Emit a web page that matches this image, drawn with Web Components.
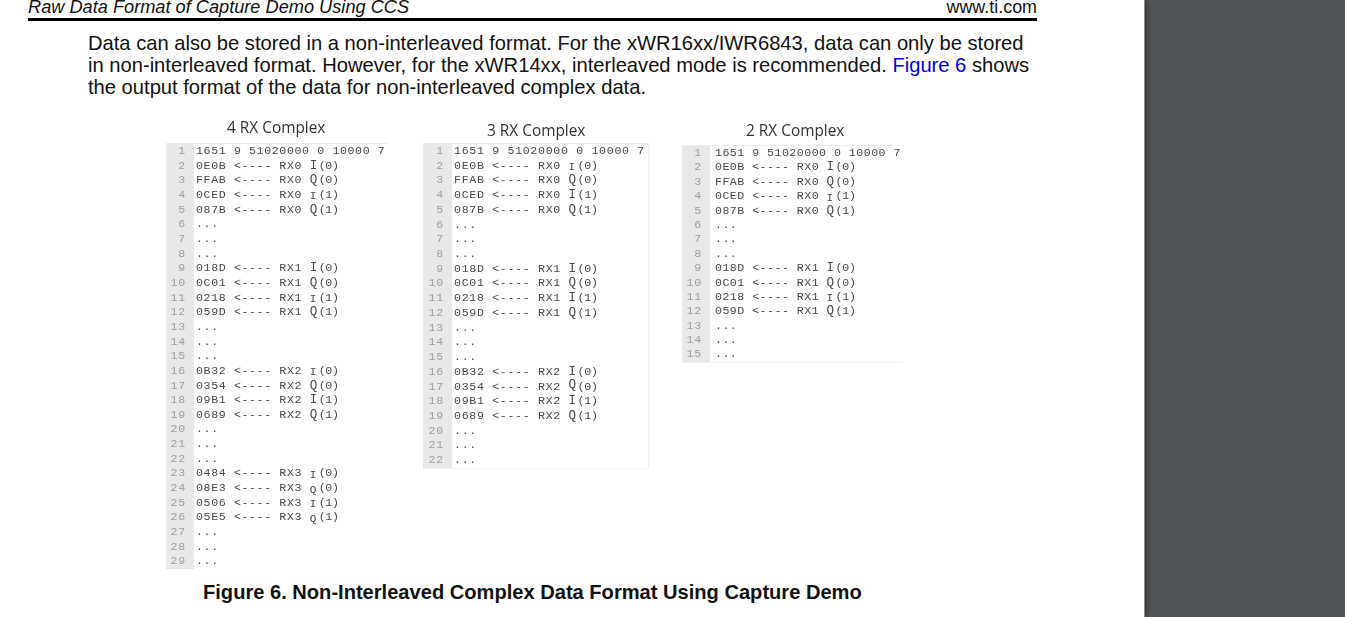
<!DOCTYPE html>
<html>
<head>
<meta charset="utf-8">
<title>Raw Data Format</title>
<style>
html, body { margin: 0; height: 100%; overflow: hidden; }
</style>
</head>
<body>
<pdf-viewer>
    <pdf-page>
        <page-header slot="header" title-text="Raw Data Format of Capture Demo Using CCS" site="www.ti.com"></page-header>
        <body-text>Data can also be stored in a non-interleaved format. For the xWR16xx/IWR6843, data can only be stored<br>in non-interleaved format. However, for the xWR14xx, interleaved mode is recommended. <a>Figure 6</a> shows<br>the output format of the data for non-interleaved complex data.</body-text>
        <capture-figure caption="Figure 6. Non-Interleaved Complex Data Format Using Capture Demo">
            <code-panel rows="29" low-rows="4,11,16,23,24,25,26" title-text="4 RX Complex" style="--panel-w:222px;--gap:35px;--title-x:61px;--title-lh:18px;--pitch:14.66px;--ls:.62px;--gutter:28px;--pad:2px;--edge:transparent"></code-panel>
            <code-panel rows="22" low-rows="2" high-rows="17" title-text="3 RX Complex" style="--panel-w:226px;--gap:33px;--title-x:64px;--title-lh:24px;--pitch:14.72px;--ls:.68px;--gutter:29px;--pad:2px"></code-panel>
            <code-panel rows="15" low-rows="4,11" title-text="2 RX Complex" style="--panel-w:222px;--gap:0px;--title-x:64px;--title-lh:24px;--pitch:14.4px;--ls:.48px;--top:2px;--gutter:28px;--pad:5px;--edge-r:transparent"></code-panel>
        </capture-figure>
    </pdf-page>
</pdf-viewer>

<script>
(() => {
    const sans = '"Liberation Sans", Arial, sans-serif';

    class PdfViewer extends HTMLElement {
        constructor() {
            super();
            this.attachShadow({mode: 'open'}).innerHTML = `
            <style>
            :host { display: flex; height: 617px; background: #525659; overflow: hidden; }
            </style>
            <slot></slot>`;
        }
    }

    class PdfPage extends HTMLElement {
        constructor() {
            super();
            this.attachShadow({mode: 'open'}).innerHTML = `
            <style>
            :host {
                display: block;
                width: 1144px;
                flex: none;
                z-index: 1;
                background: #fff;
                border-right: 1px solid #8a8c8e;
                box-shadow: 1px 0 6px rgba(0,0,0,.55);
            }
            </style>
            <slot name="header"></slot>
            <slot></slot>`;
        }
    }

    class PageHeader extends HTMLElement {
        connectedCallback() {
            this.attachShadow({mode: 'open'}).innerHTML = `
            <style>
            :host {
                display: flex;
                justify-content: space-between;
                align-items: flex-end;
                width: 1009px;
                height: 21px;
                margin-left: 28px;
                padding-bottom: 2px;
                box-sizing: border-box;
                border-bottom: 3px solid #000;
                overflow: hidden;
                font: 18.2px/18px ${sans};
                color: #111;
            }
            span { font-size: 17.9px; }
            </style>
            <i>${this.getAttribute("title-text")}</i>
            <span>${this.getAttribute("site")}</span>`;
        }
    }

    class BodyText extends HTMLElement {
        constructor() {
            super();
            this.attachShadow({mode: 'open'}).innerHTML = `
            <style>
            :host {
                display: block;
                padding: 11px 0 0 88px;
                font: 20.17px/22px ${sans};
                color: #111;
            }
            ::slotted(a) { color: #0000e0; }
            </style>
            <slot></slot>`;
        }
    }

    class CaptureFigure extends HTMLElement {
        connectedCallback() {
            this.attachShadow({mode: 'open'}).innerHTML = `
            <style>
            :host { display: block; padding: 21px 0 0 166px; }
            .row { display: flex; align-items: flex-start; }
            .caption {
                margin: 11px 0 0 37px;
                font: bold 20.1px/22px ${sans};
                color: #111;
            }
            </style>
            <div class="row"><slot></slot></div>
            <div class="caption">${this.getAttribute("caption")}</div>`;
        }
    }

    // the capture file is the same in every panel, only cut shorter
    const rxBlock = (rx, values) => [
        {v: values[0], rx, q: "I", n: 0},
        {v: values[1], rx, q: "Q", n: 0},
        {v: values[2], rx, q: "I", n: 1},
        {v: values[3], rx, q: "Q", n: 1},
        {}, {}, {}
    ];
    const capture = [
        {head: "1651 9 51020000 0 10000 7"},
        ...rxBlock("RX0", ["0E0B", "FFAB", "0CED", "087B"]),
        ...rxBlock("RX1", ["018D", "0C01", "0218", "059D"]),
        ...rxBlock("RX2", ["0B32", "0354", "09B1", "0689"]),
        ...rxBlock("RX3", ["0484", "08E3", "0506", "05E5"])
    ];

    class CodePanel extends HTMLElement {
        connectedCallback() {
            const list = name => (this.getAttribute(name) || "").split(",").map(Number);
            const low = list("low-rows");
            const high = list("high-rows");
            const rows = capture.slice(0, +this.getAttribute("rows")).map((line, i) => {
                let text = "...";
                if (line.head) text = line.head;
                else if (line.v) {
                    let cls = "iq";
                    if (low.includes(i + 1)) cls += " low";
                    if (high.includes(i + 1)) cls += " high";
                    text = `${line.v} &lt;---- ${line.rx} <span class="${cls}">${line.q}</span><span class="n">(${line.n})</span>`;
                }
                return `<div class="num">${i + 1}</div><div class="line">${text}</div>`;
            }).join("");

            this.attachShadow({mode: 'open'}).innerHTML = `
            <style>
            :host {
                display: block;
                flex: none;
                width: var(--panel-w);
                margin-right: var(--gap);
                color: #484848;
            }
            .title {
                height: 24px;
                padding-left: var(--title-x);
                font: 15.4px/var(--title-lh) "Open Sans", sans-serif;
                color: #333;
                filter: blur(.3px);
            }
            .code {
                display: grid;
                grid-template-columns: var(--gutter, 27px) 1fr;
                grid-auto-rows: var(--pitch);
                margin-top: var(--top, 0);
                border-top: 1px solid #ededed;
                border-right: 1px solid var(--edge-r, var(--edge, #efefef));
                border-bottom: 1px solid var(--edge, #efefef);
                font: 11.6px/14px "Liberation Mono", monospace;
                filter: blur(.45px);
            }
            .num {
                background: #e8e8e8;
                color: #a0a0a0;
                text-align: right;
                padding-right: 8px;
                letter-spacing: .8px;
            }
            .line {
                padding-left: var(--pad, 3px);
                white-space: pre;
                letter-spacing: var(--ls);
            }
            .iq {
                display: inline-block;
                width: 9px;
                font: 12.6px/10px "Liberation Mono", monospace;
                letter-spacing: 0;
            }
            .low { font-size: 11px; position: relative; top: 1.5px; }
            .high { position: relative; top: -2px; }
            .n { letter-spacing: -.3px; }
            </style>
            <div class="title">${this.getAttribute("title-text")}</div>
            <div class="code">${rows}</div>`;
        }
    }

    customElements.define("pdf-viewer", PdfViewer);
    customElements.define("pdf-page", PdfPage);
    customElements.define("page-header", PageHeader);
    customElements.define("body-text", BodyText);
    customElements.define("capture-figure", CaptureFigure);
    customElements.define("code-panel", CodePanel);
})();
</script>
</body>
</html>
